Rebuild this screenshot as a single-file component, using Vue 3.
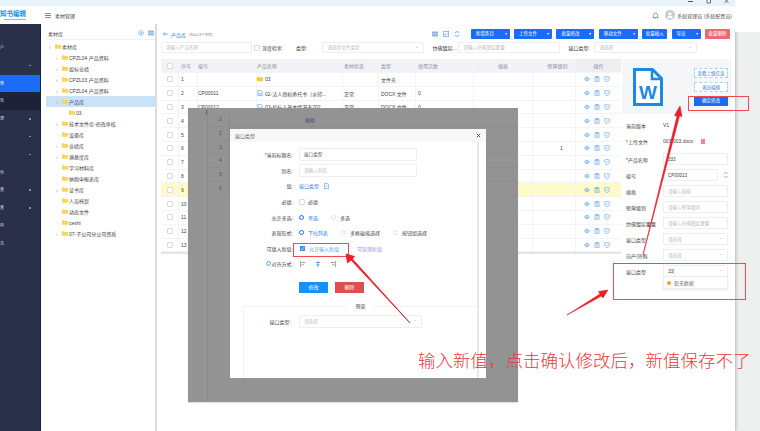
<script setup>
const menus = [
  { t: '户', arrow: false },
  { t: '', arrow: true },
  { t: '管', active: true },
  { t: '库', sub: true },
  { t: '理', arrow: true },
  { t: '', arrow: true },
  { t: '', arrow: true },
  { t: '色' },
  { t: '置', arrow: true },
  { t: '置', arrow: true },
  { t: '构' },
  { t: '志' }
]

const tree = [
  { t: '素材库', lv: 0, arrow: true },
  { t: 'CPZL04 产品资料', lv: 1, arrow: true },
  { t: '投标业绩', lv: 1, arrow: true },
  { t: 'CPZL03 产品资料', lv: 1, arrow: true },
  { t: 'CPZL04 产品资料', lv: 1, arrow: true },
  { t: '产品库', lv: 1, arrow: true, active: true },
  { t: '03', lv: 2 },
  { t: '技术文件库-修改审核', lv: 1, arrow: true },
  { t: '设备库', lv: 1 },
  { t: '业绩库', lv: 1, arrow: true },
  { t: '满意度库', lv: 1, arrow: true },
  { t: '学习材料库', lv: 1 },
  { t: '纳税申报表库', lv: 1 },
  { t: '证书库', lv: 1, arrow: true },
  { t: '人员档案', lv: 1 },
  { t: '动态文件', lv: 1 },
  { t: 'ceshi', lv: 1 },
  { t: '07-子公司分公司资质', lv: 1, arrow: true }
]

const rows = [
  { n: 1, code: '', name: '03', folder: true, status: '', type: '文件夹', uses: '' },
  { n: 2, code: 'CP00011', name: '02-法人授权委托书（水印...', status: '正常', type: 'DOCX 文件', uses: '0' },
  { n: 3, code: 'CP00012', name: '03-投标人基本情况表202...', status: '正常', type: 'DOCX 文件', uses: '0' },
  { n: 4 }, { n: 5 }, { n: 6, thick: '1' }, { n: 7 }, { n: 8 },
  { n: 9, hl: true }, { n: 10 }, { n: 11 }, { n: 12 }, { n: 13 }
]

const buttons = [
  { t: '新增条目', drop: true, w: 39 },
  { t: '上传文件', drop: true, w: 38 },
  { t: '批量修改', drop: true, w: 38 },
  { t: '移动文件', drop: true, w: 39 },
  { t: '批量插入', w: 25 },
  { t: '导出', drop: true, w: 29 },
  { t: '批量删除', w: 25, danger: true }
]

const detail = [
  { l: '编号', v: 'CP00013', refresh: true },
  { l: '规格', p: '请输入规格' },
  { l: '壁厚级别', p: '请输入壁厚级别' },
  { l: '仿佛镀层重量', p: '请输入仿佛镀层重量' },
  { l: '接口类型', p: '请选择', sel: true },
  { l: '自产/外购', p: '请选择', sel: true }
]
</script>

<template>
  <div class="page">
    <div class="app">
      <div class="strip">
        <svg class="winbtn" viewBox="0 0 7 4"><path d="M1 1.500h5" stroke="#555" fill="none" /></svg>
        <svg class="winbtn" viewBox="0 0 7 4"><path d="M2 -2h3.500v5H2z" stroke="#555" stroke-width=".8" fill="none" /></svg>
        <svg class="winbtn" viewBox="0 0 7 4"><path d="M1.500 -1l4 4M5.500 -1l-4 4" stroke="#555" stroke-width=".8" fill="none" /></svg>
      </div>
      <header class="head">
        <div class="logo">知书编辑<i></i></div>
        <svg class="burger" viewBox="0 0 8 7"><path d="M0 .5h8M0 3.500h8M0 6.500h8" stroke="#444" fill="none" /></svg>
        <span class="crumb">素材管理</span>
        <div class="user">
          <svg class="bell" viewBox="0 0 10 10"><path d="M2 7.500V4.500a3 3 0 0 1 6 0v3l1 .5H1zM4 9h2" fill="none" stroke="#555" stroke-width=".8" /></svg>
          <svg class="avatar" viewBox="0 0 12 12"><circle cx="6" cy="6" r="6" fill="#c7cbd1" /><circle cx="6" cy="4.600" r="2" fill="#fff" /><path d="M2.500 10a3.500 3 0 0 1 7 0z" fill="#fff" /></svg>
          <span>系统管理员 (系统配置员)</span>
        </div>
      </header>

      <div class="body">
        <aside class="side">
          <div v-for="(m, i) in menus" :key="i" class="mitem" :class="{ active: m.active, sub: m.sub }">
            <span>{{ m.t }}</span>
            <i v-if="m.arrow" class="mdot"></i>
          </div>
        </aside>

        <section class="tree">
          <div class="tree-head">
            <span>素材库</span>
            <svg class="ico" viewBox="0 0 10 10"><circle cx="5" cy="5" r="4" fill="none" stroke="#2b7fe0" stroke-dasharray="1.500 .6" /><circle cx="5" cy="5" r="1.500" fill="none" stroke="#2b7fe0" stroke-width=".8" /></svg>
            <svg class="ico" viewBox="0 0 10 10"><path d="M0 2h10M0 5h10M0 8h10" stroke="#2b7fe0" stroke-width="1.300" fill="none" /></svg>
          </div>
          <div
            v-for="(n, i) in tree"
            :key="i"
            class="tnode"
            :class="['lv' + n.lv, { active: n.active }]"
          >
            <span class="tarrow">{{ n.arrow ? '›' : '' }}</span>
            <svg class="folder" viewBox="0 0 12 9"><path d="M0 1q0-1 1-1h3l1 1.500h6q1 0 1 1V8q0 1-1 1H1q-1 0-1-1z" fill="#ffd45c" /></svg>
            <span>{{ n.t }}</span>
          </div>
        </section>

        <main class="main">
          <div class="bar">
            <svg class="back" viewBox="0 0 8 6"><path d="M3 .5L.7 3 3 5.500M1 3h7" stroke="#2b7fe0" fill="none" /></svg>
            <b class="here">产品库</b>
            <span class="count">(包含13个项目)</span>
            <div class="tools">
              <svg class="tool" viewBox="0 0 10 10"><path d="M0 2h10M0 5h10M0 8h10" stroke="#2b6cc4" stroke-width="1.300" fill="none" /></svg>
              <svg class="tool" viewBox="0 0 10 10"><path d="M.5.5h9v9h-9zM2 7l2-2 1.500 1.500L8 4" stroke="#2b7fe0" fill="none" /></svg>
              <svg class="tool" viewBox="0 0 10 10"><path d="M8.500 3A4 4 0 0 0 1.500 3.500M1.500 7a4 4 0 0 0 7-.5" stroke="#2b7fe0" stroke-width="1.100" fill="none" /></svg>
            </div>
            <div class="btns">
              <span
                v-for="b in buttons"
                :key="b.t"
                class="btn"
                :class="{ danger: b.danger, dropbtn: b.drop }"
                :style="{ width: b.w + 'px' }"
              >{{ b.t }}<em v-if="b.drop">▾</em></span>
            </div>
          </div>

          <div class="filters">
            <div class="input f-name">请输入产品名称</div>
            <span class="check"></span>
            <span class="f-deep">深度检索</span>
            <span class="f-label f-type">类型:</span>
            <div class="input f-sel">请选择文件类型<i class="caret"></i></div>
            <span class="f-label f-plate">仿佛镀层...</span>
            <div class="input f-plate-in">请输入仿佛镀层重量</div>
            <span class="f-label f-port">接口类型:</span>
            <div class="input f-sel2">请选择<i class="caret"></i></div>
          </div>

          <div class="content">
            <div class="table">
              <div class="tr th">
                <div class="c c-ck"><span class="check"></span></div>
                <div class="c c-n">序号</div>
                <div class="c c-code">编号</div>
                <div class="c c-name">产品名称</div>
                <div class="c c-st">素材状态</div>
                <div class="c c-ty">类型</div>
                <div class="c c-us">使用次数</div>
                <div class="c c-sp">规格</div>
                <div class="c c-th">壁厚级别</div>
                <div class="c c-op">操作</div>
              </div>
              <div v-for="r in rows" :key="r.n" class="tr" :class="{ hl: r.hl }">
                <div class="c c-ck"><span class="check"></span></div>
                <div class="c c-n dark">{{ r.n }}</div>
                <div class="c c-code dark">{{ r.code }}</div>
                <div class="c c-name dark">
                  <svg v-if="r.folder" class="rowico" viewBox="0 0 12 9"><path d="M0 1q0-1 1-1h3l1 1.500h6q1 0 1 1V8q0 1-1 1H1q-1 0-1-1z" fill="#ffc832" /></svg>
                  <svg v-else-if="r.name" class="rowico" viewBox="0 0 8 10"><path d="M.5.5h4.500L7.500 3v6.500h-7z" fill="#fff" stroke="#3d8ef0" /><path d="M2 5l.8 3 1.200-2.500L5.200 8 6 5" stroke="#3d8ef0" stroke-width=".6" fill="none" /></svg>
                  <span>{{ r.name }}</span>
                </div>
                <div class="c c-st dark">{{ r.status }}</div>
                <div class="c c-ty dark">{{ r.type }}</div>
                <div class="c c-us dark">{{ r.uses }}</div>
                <div class="c c-sp"></div>
                <div class="c c-th dark cell-thick">{{ r.thick }}</div>
                <div class="c c-op ops">
                  <svg viewBox="0 0 10 8"><path d="M.5 4Q5-2 9.500 4 5 10 .5 4z" fill="none" stroke="#3d8ee8" /><circle cx="5" cy="4" r="1.400" fill="#3d8ee8" /></svg>
                  <svg viewBox="0 0 8 10"><path d="M.5 1.500h7v8h-7zM2.500.5h3v2h-3zM2 5h4M2 7h4" fill="none" stroke="#3d8ee8" stroke-width=".8" /></svg>
                  <svg viewBox="0 0 9 10"><path d="M.5 1.500L4.500.5l4 1V5q0 3-4 4.500Q.5 8 .5 5zM2.500 4.500l1.500 1.500 2.500-2.500" fill="none" stroke="#3d8ee8" stroke-width=".8" /></svg>
                </div>
              </div>
            </div>

            <aside class="panel">
              <div class="preview">
                <svg class="word" viewBox="0 0 30 38">
                  <path d="M1.500 1.500h18l9 9v26h-27z" fill="#fff" stroke="#1e88e5" stroke-width="3" />
                  <path d="M19 2v9h9" fill="none" stroke="#1e88e5" stroke-width="2.500" />
                  <text x="15" y="31" class="w">W</text>
                </svg>
                <div class="pv-btns">
                  <span class="dash">查看上级信息</span>
                  <span class="dash">退出编辑</span>
                  <span class="solid">确定修改</span>
                </div>
              </div>
              <div class="dform">
                <div class="drow first"><label>当前版本</label><span class="dv">V1</span></div>
                <div class="drow"><label><i class="req">*</i>上传文件</label><span class="dv">003-003.docx</span><i class="del"></i></div>
                <div class="drow gap2"><label><i class="req">*</i>产品名称</label><div class="input dinput val">333</div></div>
                <div v-for="d in detail" :key="d.l" class="drow">
                  <label>{{ d.l }}</label>
                  <div class="input dinput" :class="{ val: d.v, short: d.refresh }">
                    {{ d.v || d.p }}<i v-if="d.sel" class="caret"></i>
                  </div>
                  <svg v-if="d.refresh" class="ref" viewBox="0 0 10 10"><path d="M8.500 3A4 4 0 0 0 1.500 3.500M1.500 7a4 4 0 0 0 7-.5" stroke="#666" stroke-width=".8" fill="none" /></svg>
                </div>
                <div class="drow">
                  <label>接口类型</label>
                  <div class="input dinput val open">33|<i class="caret up"></i></div>
                </div>
                <div class="nodata"><i class="warn">!</i>暂无数据</div>
              </div>
            </aside>
          </div>
        </main>
      </div>
    </div>

    <!-- 截图里的遮罩层 -->
    <div class="mask">
      <i class="mask-caret"></i>
      <div class="ghost">
        <div v-for="i in 6" :key="i" class="ghost-row">
          <span class="g-n">{{ i }}</span>
          <span class="g-t">{{ i === 1 ? '规格' : '' }}</span>
        </div>
      </div>
    </div>

    <div class="modal">
      <div class="m-title">
        <span>接口类型</span>
        <svg class="m-close" viewBox="0 0 6 6"><path d="M1 1l4 4M5 1L1 5" stroke="#444" stroke-width="1.100" fill="none" /></svg>
      </div>
      <div class="m-body">
        <div class="m-row"><label><i class="req">*</i>当前标题名:</label><div class="input m-in val">接口类型</div></div>
        <div class="m-row"><label>别名:</label><div class="input m-in">请输入别名</div></div>
        <div class="m-row">
          <label>值:</label><span class="link">接口类型</span>
          <svg class="edit" viewBox="0 0 8 10"><path d="M.5.5h4.500L7.500 3v6.500h-7zM2 6l3-2" fill="none" stroke="#3d8ef0" /></svg>
        </div>
        <div class="m-row"><label>必填:</label><span class="check big"></span><span class="opt">必填</span></div>
        <div class="m-row">
          <label>允许多选:</label>
          <span class="radio on"></span><span class="opt sel">单选</span>
          <span class="radio"></span><span class="opt">多选</span>
        </div>
        <div class="m-row">
          <label>表现形式:</label>
          <span class="radio on"></span><span class="opt sel">下拉列表</span>
          <span class="radio"></span><span class="opt">多框磁吸选择</span>
          <span class="radio"></span><span class="opt">按钮组选择</span>
        </div>
        <div class="m-row">
          <label>可填入新值:</label>
          <span class="tick">✓</span><span class="opt light">允许输入新值</span>
          <span class="purple">可管理新值</span>
        </div>
        <div class="m-row">
          <label><i class="info"></i>对齐方式:</label>
          <div class="aligns">
            <svg viewBox="0 0 8 8"><path d="M.5 0v8M2 2h5M2 5h3" stroke="#777" fill="none" /></svg>
            <svg viewBox="0 0 8 8"><path d="M4 0v8M1 2h6M2 5h4" stroke="#3d8ef0" fill="none" /></svg>
            <svg viewBox="0 0 8 8"><path d="M7.500 0v8M1 2h5M3 5h3" stroke="#777" fill="none" /></svg>
          </div>
        </div>
        <div class="m-btns"><span class="m-ok">修改</span><span class="m-del">删除</span></div>
        <fieldset class="m-preview">
          <legend>预览</legend>
          <div class="m-row pv"><label>接口类型:</label><div class="input pv-in">请选择<i class="caret"></i></div></div>
        </fieldset>
      </div>
      <i class="m-scroll"></i>
    </div>

    <!-- 红色标注 -->
    <div class="note-box nb1"></div>
    <div class="note-box nb2"></div>
    <div class="note-box nb3"></div>
    <svg class="arrows" viewBox="0 0 760 431">
      <path d="M410 323L351 260l-3.500 3-1.500-9 8.500 2.500-2 2.500z" fill="#e8202a" stroke="#e8202a" stroke-width=".8" />
      <path d="M567 315L600 294l-1.500-2.500 9.500-1.500-5 8-1.500-2z" fill="#e8202a" stroke="#e8202a" stroke-width=".6" />
      <path d="M643 255L677 116l-2.500-.5L680 106l2 10.500-2.500-.5z" fill="#e8202a" stroke="#e8202a" stroke-width=".6" />
    </svg>
    <div class="note-text">输入新值，点击确认修改后，新值保存不了</div>
  </div>
</template>

<style>
html, body { margin: 0; background: #fff; }
</style>

<style scoped>
.page {
  position: relative;
  width: 760px;
  height: 431px;
  overflow: hidden;
  background: linear-gradient(90deg, #dfe3e3, #eef0f0);
  font-family: "Liberation Sans", "Noto Sans CJK SC", sans-serif;
  font-size: 5px;
  color: #555;
}
.app {
  width: 735px;
  height: 431px;
  background: #fff;
  display: flex;
  flex-direction: column;
  box-shadow: 1px 0 3px rgba(0,0,0,.25);
}
.page::before {
  content: "";
  position: absolute;
  left: 735px; top: 0; right: 0;
  height: 32px;
  background: #fff;
}
.strip {
  height: 6px;
  background: #e6f3f8;
  display: flex;
  justify-content: flex-end;
  gap: 11px;
  padding-right: 5px;
  flex-shrink: 0;
}
.winbtn { width: 7px; height: 4px; }
.head {
  height: 18px;
  display: flex;
  align-items: center;
  flex-shrink: 0;
}
.logo {
  width: 41px;
  font-size: 6.500px;
  line-height: 8px;
  font-weight: 700;
  color: #1590f0;
  white-space: nowrap;
  flex-shrink: 0;
  margin-top: -1px;
}
.logo i { display: block; width: 22px; height: 1px; margin: 1px 0 0 4px; background: #7cc0f0; }
.burger { width: 6px; height: 5px; margin: 0 4px 0 4px; }
.crumb { font-size: 5px; color: #444; }
.user {
  margin-left: auto;
  display: flex;
  align-items: center;
  padding-right: 3px;
  color: #555;
}
.bell { width: 7px; height: 7px; margin-right: 6px; }
.avatar { width: 10px; height: 10px; margin-right: 2px; }
.body { flex: 1; display: flex; min-height: 0; }
.side {
  width: 41px;
  background: #2a2f4a;
  border-right: 1px solid #1d2033;
  box-sizing: border-box;
  flex-shrink: 0;
  padding-top: 15px;
  overflow: hidden;
}
.mitem {
  height: 17.800px;
  line-height: 17.800px;
  color: #d5d8e2;
  font-size: 4px;
  position: relative;
  white-space: nowrap;
}
.mitem.active { background: #1a6cf5; color: #fff; }
.mitem.sub { background: #1e2238; }
.mdot {
  position: absolute;
  right: 9px; top: 8px;
  width: 2px; height: 1.500px;
  background: #8a8fa3;
}
.tree {
  width: 109px;
  margin-left: 5px;
  border-right: 2px solid #dcdcdc;
  flex-shrink: 0;
}
.tree-head {
  height: 12px;
  margin-top: 3px;
  margin-bottom: 1px;
  padding: 0 1px 0 2px;
  display: flex;
  align-items: center;
  gap: 4px;
  color: #444;
  border-bottom: 1px solid #f0f0f0;
  font-size: 5px;
}
.tree-head span { flex: 1; }
.ico { width: 6px; height: 6px; }
.tnode {
  height: 11px;
  display: flex;
  align-items: center;
  color: #444;
  white-space: nowrap;
}
.tnode.active { background: #c9e2f8; }
.lv0 { padding-left: 3px; }
.lv1 { padding-left: 10px; }
.lv2 { padding-left: 17px; }
.tarrow { width: 6px; color: #999; font-size: 5px; }
.folder { width: 6px; height: 5px; margin-right: 1px; }
.main { flex: 1; padding: 0 3px 0 4px; min-width: 0; }
.bar { height: 14px; margin-top: 3px; display: flex; align-items: center; }
.back { width: 5px; height: 4px; margin: 0 3px 0 2px; flex-shrink: 0; }
.here { color: #2b7fe0; font-weight: 400; font-size: 5px; white-space: nowrap; }
.count { margin-left: 3px; font-size: 3.500px; color: #888; white-space: nowrap; }
.tools { margin-left: auto; margin-right: 11px; display: flex; gap: 5px; flex-shrink: 0; }
.tool { width: 6px; height: 6px; }
.btns { margin-right: 2px; display: flex; gap: 4.400px; flex-shrink: 0; }
.btn {
  height: 10px;
  line-height: 10px;
  background: #1a6cf5;
  color: #fff;
  font-size: 4.500px;
  text-align: center;
  border-radius: 1px;
  position: relative;
  white-space: nowrap;
}
.dropbtn { text-align: left; padding-left: 5px; box-sizing: border-box; }
.btn em { position: absolute; right: 3px; font-style: normal; font-size: 4px; }
.btn.danger { background: #ef6a70; }
.filters { height: 11px; margin-top: 1px; display: flex; align-items: center; }
.input {
  height: 11px;
  line-height: 10px;
  box-sizing: border-box;
  border: 1px solid #eeeff2;
  border-radius: 1px;
  padding-left: 4px;
  color: #bbb;
  font-size: 4.600px;
  position: relative;
  white-space: nowrap;
  background: #fff;
}
.f-name { width: 91px; margin-left: 0; }
.check {
  display: inline-block;
  width: 6px; height: 6px;
  border: 1px solid #d8dade;
  border-radius: 1px;
  box-sizing: border-box;
  background: #fff;
}
.filters .check { margin-left: 2px; }
.f-deep { margin-left: 2px; color: #444; white-space: nowrap; }
.f-label { color: #333; white-space: nowrap; }
.f-type { margin-left: 14px; }
.f-sel { width: 102px; margin-left: 15px; }
.f-plate { margin-left: 8px; width: 26px; }
.f-plate-in { width: 102px; }
.f-port { margin-left: 8px; width: 26px; }
.f-sel2 { width: 103px; }
.caret {
  position: absolute;
  right: 5px; top: 4px;
  border: 1.500px solid transparent;
  border-top-color: #b5b5b5;
  border-bottom: 0;
}
.caret.up { border-top: 0; border-bottom: 1.500px solid #b5b5b5; }
.content { display: flex; margin-top: 6px; }
.table {
  width: 460px;
  flex-shrink: 0;
  border-bottom: 2px solid #e5e5e5;
  align-self: flex-start;
}
.tr {
  display: flex;
  height: 13.800px;
  border-bottom: 1px solid #f3f4f6;
  box-sizing: border-box;
  align-items: stretch;
}
.tr.th { background: #f1f3f6; height: 14px; color: #8a8f99; }
.tr.hl { background: #fdfcc8; }
.c {
  display: flex;
  align-items: center;
  border-right: 1px solid #f3f4f6;
  box-sizing: border-box;
  white-space: nowrap;
  overflow: hidden;
}
.dark { color: #444; }
.c-ck { width: 18px; justify-content: center; }
.c-n { width: 19px; padding-left: 2px; }
.c-code { width: 59px; padding-left: 0; }
.c-name { width: 86px; }
.c-st { width: 36px; padding-left: 1px; }
.c-ty { width: 37px; padding-left: 2px; }
.c-us { width: 58px; padding-left: 2px; }
.c-sp { width: 59px; justify-content: center; }
.c-th { width: 43px; justify-content: center; padding-left: 7px; }
.c-th.cell-thick { padding-left: 15px; }
.c-op { width: 45px; justify-content: center; border-right: 0; }
.th .c-op { background: #eceef2; }
.rowico { width: 6px; height: 6px; margin-right: 2px; flex-shrink: 0; }
.ops { gap: 4px; padding-right: 4px; }
.ops svg { width: 6px; height: 6px; flex-shrink: 0; }
.panel { flex: 1; padding-left: 1px; min-width: 0; }
.preview {
  height: 55px;
  background: #f5f6f7;
  display: flex;
  box-sizing: border-box;
  padding: 9px 4px 0 11px;
  justify-content: space-between;
}
.word { width: 30px; height: 38px; }
.w { font: 700 19px "Liberation Sans", sans-serif; fill: #1e88e5; text-anchor: middle; }
.pv-btns { display: flex; flex-direction: column; gap: 4px; width: 34px; }
.dash, .solid {
  height: 10px;
  line-height: 9px;
  text-align: center;
  box-sizing: border-box;
  font-size: 4.500px;
  white-space: nowrap;
}
.dash { border: 1px dashed #a9d2f7; color: #2b7fe0; background: #fff; }
.solid { background: #1a6cf5; color: #fff; line-height: 10px; }
.dform { padding-left: 4px; padding-top: 6px; }
.drow { display: flex; align-items: center; height: 16px; color: #444; position: relative; }
.drow.first { height: 10px; margin-bottom: 3px; }
.drow.gap2 { margin-top: 2px; }
.drow label { width: 37px; flex-shrink: 0; white-space: nowrap; }
.req { color: #f00; font-style: normal; }
.dv { color: #444; }
.del {
  width: 4px; height: 5px;
  margin-left: 8px;
  background: #ef8a8a;
}
.dinput { width: 65px; height: 12px; line-height: 11px; }
.dinput.val { color: #444; }
.dinput.short { width: 55px; }
.ref { width: 6px; height: 6px; margin-left: 5px; }
.nodata {
  width: 65px;
  height: 13px;
  margin-left: 37px;
  margin-top: -3px;
  box-sizing: border-box;
  padding-left: 3px;
  display: flex;
  align-items: center;
  gap: 3px;
  color: #777;
  border: 1px solid #eee;
  box-shadow: 0 1px 2px rgba(0,0,0,.1);
  background: #fff;
  position: relative;
}
.warn {
  width: 4px; height: 4px;
  border-radius: 50%;
  background: #f59a23;
  color: #fff;
  font-size: 3px;
  line-height: 4px;
  text-align: center;
  font-style: normal;
}
.mask {
  position: absolute;
  left: 188px; top: 108px;
  width: 330px; height: 294px;
  background: #939393;
  box-shadow: 0 1px 1px rgba(0,0,0,.12);
  overflow: hidden;
}
.mask-caret {
  position: absolute;
  left: 18px; top: 2px;
  width: 1px; height: 5px;
  background: #3c6ea8;
}
.ghost {
  margin-left: 19px;
  padding-top: 5px;
  width: 311px;
  border-left: 1px solid #8a8a8a;
  height: 294px;
  box-sizing: border-box;
}
.ghost-row {
  height: 13.800px;
  display: flex;
  align-items: center;
  color: #555;
  border-bottom: 1px solid #8d8d8d;
  box-sizing: border-box;
}
.g-n { width: 22px; padding-left: 11px; box-sizing: border-box; border-right: 1px solid #8a8a8a; height: 100%; line-height: 13px; }
.g-t { margin-left: 75px; color: #3c4f7a; }
.modal {
  position: absolute;
  left: 230px; top: 129px;
  width: 256px; height: 249px;
  background: #fff;
  overflow: hidden;
}
.m-title {
  height: 13px;
  background: #f7f7f7;
  display: flex;
  align-items: center;
  justify-content: space-between;
  padding: 0 5px;
  color: #666;
}
.m-close { width: 5px; height: 5px; }
.m-body { padding-top: 5px; }
.m-row { height: 15.600px; display: flex; align-items: center; color: #444; white-space: nowrap; }
.m-row label { width: 69px; text-align: right; padding-right: 6px; box-sizing: border-box; flex-shrink: 0; white-space: nowrap; }
.m-in { width: 118px; height: 13px; line-height: 11px; }
.m-in.val { color: #555; }
.link { color: #2b7fe0; }
.edit { width: 5px; height: 6px; margin-left: 5px; }
.check.big { width: 6px; height: 6px; margin-right: 3px; }
.opt { margin-right: 13px; color: #444; }
.opt.sel { color: #2b7fe0; }
.opt.light { color: #59a8ef; }
.radio {
  width: 5px; height: 5px;
  border: 1px solid #e2e2e2;
  border-radius: 50%;
  box-sizing: border-box;
  margin-right: 4px;
}
.radio.on { border: 1.500px solid #1a6cf5; }
.tick {
  width: 5px; height: 5px;
  margin: 0 4px 0 1px;
  background: #3d8ef0;
  color: #fff;
  font-size: 4px;
  line-height: 5px;
  text-align: center;
}
.purple { margin-left: 5px; color: #b48ad8; }
.info {
  display: inline-block;
  width: 3px; height: 3px;
  border: 1px solid #67a9ee;
  border-radius: 50%;
  margin-right: 1px;
}
.aligns { display: flex; gap: 9px; padding-left: 1px; }
.aligns svg { width: 6px; height: 6px; }
.m-btns { display: flex; gap: 7px; margin: 10px 0 0 69px; }
.m-ok, .m-del {
  width: 29px; height: 11px;
  line-height: 11px;
  text-align: center;
  color: #fff;
}
.m-ok { background: #1890ff; }
.m-del { background: #dc5050; }
.m-preview {
  margin: 11px 0 0 13px;
  width: 235px;
  height: 80px;
  padding: 0;
  border: 1px solid #f2f2f2;
  box-sizing: border-box;
}
.m-preview legend { margin: 0 auto; padding: 0 8px; color: #444; font-size: 5px; line-height: 5px; }
.pv { height: 13px; margin-top: 6px; }
.pv label { width: 55px; padding-right: 8px; }
.pv-in { width: 123px; height: 13px; line-height: 11px; }
.m-scroll {
  position: absolute;
  left: 247px; top: 13px; bottom: 0;
  width: 2px;
  background: #e8e8e8;
}
.note-box { position: absolute; border: 1px solid #ee4a50; box-sizing: border-box; }
.nb1 { left: 293px; top: 243px; width: 56px; height: 14px; }
.nb2 { left: 688px; top: 96px; width: 61px; height: 15px; }
.nb3 { left: 613px; top: 263px; width: 133px; height: 37px; }
.arrows { position: absolute; left: 0; top: 0; width: 760px; height: 431px; pointer-events: none; }
.note-text {
  position: absolute;
  left: 418px; top: 348px;
  font-size: 17.500px;
  line-height: 24px;
  color: #f0353a;
  white-space: nowrap;
  font-family: "Noto Sans CJK SC", sans-serif;
  font-weight: 300;
}
</style>
